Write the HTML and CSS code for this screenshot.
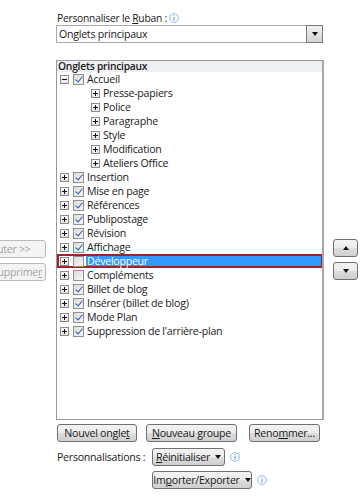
FILE: index.html
```html
<!DOCTYPE html>
<html lang="fr">
<head>
<meta charset="utf-8">
<link rel="stylesheet" href="styles.css">
</head>
<body>
<div class="page">
  <div class="top">
    <div class="label-row"><span>Personnaliser le <u>R</u>uban :</span><svg class="info" viewBox="0 0 10 10"><circle cx="5" cy="5" r="4.4" fill="#fff" stroke="#8fb2e0" stroke-width="0.9"/><rect x="4.5" y="2.2" width="1" height="1" fill="#5a8fd6"/><rect x="4.5" y="4" width="1" height="3.8" fill="#5a8fd6"/></svg></div>
    <div class="select">
      <span class="select-text">Onglets principaux</span>
      <span class="select-btn"><span class="tri-down"></span></span>
    </div>
  </div>

  <div class="middle">
    <div class="leftcol">
      <div class="btn disabled add"><span>Ajouter &gt;&gt;</span></div>
      <div class="btn disabled del"><span>Supprime<u>r</u></span></div>
    </div>

    <div class="listbox">
      <div class="list-head">Onglets principaux</div>
      <div class="row"><span class="exp minus"></span><span class="cb on"></span><span class="txt">Accueil</span></div>
      <div class="row child"><span class="exp"></span><span class="txt">Presse-papiers</span></div>
      <div class="row child"><span class="exp"></span><span class="txt">Police</span></div>
      <div class="row child"><span class="exp"></span><span class="txt">Paragraphe</span></div>
      <div class="row child"><span class="exp"></span><span class="txt">Style</span></div>
      <div class="row child"><span class="exp"></span><span class="txt">Modification</span></div>
      <div class="row child"><span class="exp"></span><span class="txt">Ateliers Office</span></div>
      <div class="row"><span class="exp"></span><span class="cb on"></span><span class="txt">Insertion</span></div>
      <div class="row"><span class="exp"></span><span class="cb on"></span><span class="txt">Mise en page</span></div>
      <div class="row"><span class="exp"></span><span class="cb on"></span><span class="txt">Références</span></div>
      <div class="row"><span class="exp"></span><span class="cb on"></span><span class="txt">Publipostage</span></div>
      <div class="row"><span class="exp"></span><span class="cb on"></span><span class="txt">Révision</span></div>
      <div class="row"><span class="exp"></span><span class="cb on"></span><span class="txt">Affichage</span></div>
      <div class="row sel"><span class="exp"></span><span class="cb"></span><span class="txt">Développeur</span></div>
      <div class="row"><span class="exp"></span><span class="cb"></span><span class="txt">Compléments</span></div>
      <div class="row"><span class="exp"></span><span class="cb on"></span><span class="txt">Billet de blog</span></div>
      <div class="row"><span class="exp"></span><span class="cb on"></span><span class="txt">Insérer (billet de blog)</span></div>
      <div class="row"><span class="exp"></span><span class="cb on"></span><span class="txt">Mode Plan</span></div>
      <div class="row"><span class="exp"></span><span class="cb on"></span><span class="txt">Suppression de l'arrière-plan</span></div>
    </div>

    <div class="rightcol">
      <div class="btn arrow"><span class="tri-up"></span></div>
      <div class="btn arrow"><span class="tri-down"></span></div>
    </div>
  </div>

  <div class="bottom">
    <div class="btn-row">
      <div class="btn b-onglet"><span>Nouvel ongle<u>t</u></span></div>
      <div class="btn b-groupe"><span><u>N</u>ouveau groupe</span></div>
      <div class="btn b-renom"><span>Reno<u>m</u>mer...</span></div>
    </div>
    <div class="perso">
      <span class="perso-label">Personnalisations :</span>
      <div class="perso-line">
        <div class="btn menu b-reinit"><span><u>R</u>éinitialiser</span><span class="tri-down"></span></div>
        <svg class="info" viewBox="0 0 10 10"><circle cx="5" cy="5" r="4.4" fill="#fff" stroke="#8fb2e0" stroke-width="0.9"/><rect x="4.5" y="2.2" width="1" height="1" fill="#5a8fd6"/><rect x="4.5" y="4" width="1" height="3.8" fill="#5a8fd6"/></svg>
      </div>
      <span></span>
      <div class="perso-line">
        <div class="btn menu b-import"><span>Im<u>p</u>orter/Exporter</span><span class="tri-down"></span></div>
        <svg class="info" viewBox="0 0 10 10"><circle cx="5" cy="5" r="4.4" fill="#fff" stroke="#8fb2e0" stroke-width="0.9"/><rect x="4.5" y="2.2" width="1" height="1" fill="#5a8fd6"/><rect x="4.5" y="4" width="1" height="3.8" fill="#5a8fd6"/></svg>
      </div>
    </div>
  </div>
</div>
</body>
</html>
```

FILE: styles.css
```css
* { box-sizing: border-box; }
html, body { margin: 0; padding: 0; background: #fff; }
body {
  width: 364px;
  height: 497px;
  overflow: hidden;
  font-family: "Open Sans", "Noto Sans", sans-serif;
  font-size: 10.3px;
  letter-spacing: -0.25px;
  color: #1a1a1a;
}
u { text-decoration: underline; text-underline-offset: 1px; }

.page { display: flex; flex-direction: column; }

.top { padding: 11px 0 0 56px; }
.label-row {
  display: flex;
  align-items: center;
  height: 14px;
  padding-left: 1px;
  white-space: nowrap;
}
.info { width: 10px; height: 10px; margin-left: 2px; flex: none; }

.select {
  width: 267px;
  height: 18px;
  border: 1px solid #a9a9a9;
  display: flex;
  align-items: center;
  justify-content: space-between;
  background: #fff;
}
.select-text { padding-left: 2px; font-size: 10.6px; }
.select-btn {
  width: 17px;
  height: 18px;
  margin: -1px -1px -1px 0;
  border: 1px solid #7b7b7b;
  background: linear-gradient(#f1f1f1, #d4d4d4);
  display: flex;
  align-items: center;
  justify-content: center;
}

.tri-down, .tri-up {
  display: inline-block;
  width: 0; height: 0;
  border-left: 3.5px solid transparent;
  border-right: 3.5px solid transparent;
}
.tri-down { border-top: 4px solid #111; }
.tri-up { border-bottom: 4px solid #111; }

.middle { display: flex; margin-top: 17px; }

.leftcol {
  width: 56px;
  padding-top: 180px;
  display: flex;
  flex-direction: column;
  gap: 5px;
  flex: none;
}

.btn {
  height: 18px;
  border: 1px solid #707070;
  border-radius: 3px;
  background: linear-gradient(#f3f3f3 0%, #ebebeb 50%, #dddddd 51%, #cfcfcf 100%);
  display: flex;
  align-items: center;
  justify-content: center;
  white-space: nowrap;
  color: #1a1a1a;
  font-size: 10.6px;
}
.btn.disabled {
  border-color: #b7bbbe;
  background: #f4f4f4;
  color: #a3a3a3;
  width: 82px;
  margin-left: -36px;
}
.btn.add { justify-content: flex-start; padding-left: 17px; }
.btn.del { justify-content: flex-start; padding-left: 27px; }

.listbox {
  width: 268px;
  height: 360px;
  border: 1px solid #9a9a9a;
  border-right: 2px solid #a8a8a8;
  flex: none;
  overflow: hidden;
}
.list-head {
  height: 11px;
  line-height: 11px;
  background: #eef0f4;
  font-weight: 600;
  padding-left: 1px;
  white-space: nowrap;
}

.row {
  height: 14px;
  display: flex;
  align-items: center;
  padding-left: 3px;
}
.row.child { padding-left: 34px; }

.exp {
  width: 9px; height: 9px;
  border: 1px solid #8d8d8d;
  background: linear-gradient(#ffffff, #e4e4e4);
  position: relative;
  flex: none;
}
.exp::before {
  content: "";
  position: absolute;
  left: 1px; top: 3px;
  width: 5px; height: 1px;
  background: #111;
}
.exp::after {
  content: "";
  position: absolute;
  left: 3px; top: 1px;
  width: 1px; height: 5px;
  background: #111;
}
.exp.minus::after { display: none; }

.cb {
  width: 11px; height: 11px;
  margin-left: 4px;
  border: 1px solid #8e8f8f;
  background: linear-gradient(135deg, #dcdcdc, #f6f6f6);
  flex: none;
  position: relative;
}
.cb.on::after {
  content: "";
  position: absolute;
  left: 3px; top: 0px;
  width: 3px; height: 6px;
  border-right: 1.6px solid #2f55b4;
  border-bottom: 1.6px solid #2f55b4;
  transform: rotate(40deg);
}

.txt { padding-left: 3px; white-space: nowrap; font-size: 10.6px; }

.row.sel {
  border: 2px solid #a3202d;
  padding-left: 1px;
  margin-right: -1px;
}
.row.sel .txt {
  flex: 1;
  align-self: stretch;
  background: #3399ff;
  color: #fff;
  margin-left: 2px;
  padding-left: 1px;
  display: flex;
  align-items: center;
}

.rightcol {
  padding: 179px 0 0 9px;
  display: flex;
  flex-direction: column;
  gap: 5px;
}
.btn.arrow { width: 25px; height: 18px; }

.bottom { padding: 4px 0 0 57px; }
.btn-row { display: flex; }
.b-onglet { width: 80px; }
.b-groupe { width: 91px; margin-left: 9px; }
.b-renom { width: 71px; margin-left: 12px; }

.perso {
  display: grid;
  grid-template-columns: 95px auto;
  row-gap: 5px;
  margin-top: 6px;
  align-items: center;
}
.perso-label { white-space: nowrap; font-size: 10.6px; }
.perso-line { display: flex; align-items: center; }
.perso-line .info { margin-left: 5px; }
.btn.menu { gap: 5px; }
.b-reinit { width: 73px; }
.b-import { width: 100px; }
```
